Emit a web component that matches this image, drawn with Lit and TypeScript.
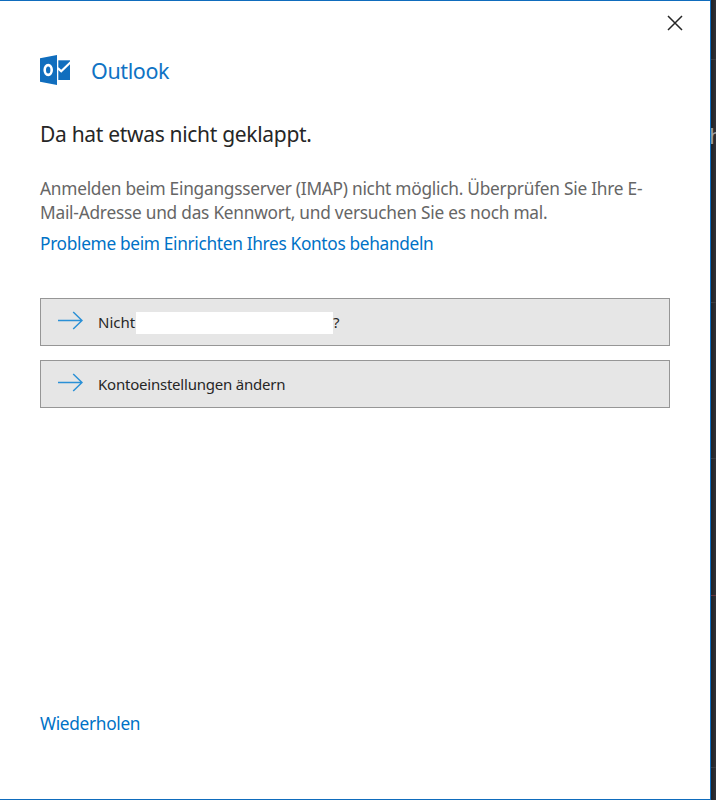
import { LitElement, html, css, svg } from "lit";
import { customElement } from "lit/decorators.js";

const arrow = svg`<path d="M0 9.5H24M15.2 1L24 9.5L15.2 18" fill="none" stroke="#2a90d6" stroke-width="1.5"/>`;

@customElement("app-root")
export class AppRoot extends LitElement {
  static styles = css`
    :host {
      display: flex;
      width: 716px;
      height: 800px;
      overflow: hidden;
      background: #2d2e33;
      font-family: "Noto Sans", "Open Sans", sans-serif;
      color: #262626;
    }
    .dialog {
      box-sizing: border-box;
      flex: none;
      width: 711px;
      height: 800px;
      display: flex;
      flex-direction: column;
      padding: 0 40px;
      background: #fff;
      border: 1px solid #0f6cbd;
      border-left: 0;
    }
    .backdrop {
      flex: none;
      width: 5px;
      height: 800px;
      overflow: hidden;
      background: linear-gradient(90deg, #202125, #303137);
    }
    .backdrop svg { display: block; }
    .top {
      display: flex;
      justify-content: flex-end;
      height: 52px;
      margin-right: -13px;
      padding-top: 14px;
      box-sizing: border-box;
    }
    .brand { display: flex; align-items: center; height: 34px; gap: 21px; }
    .brand svg, .top svg, .choice svg { display: block; flex: none; }
    .name { padding-top: 2px; font-size: 21.5px; line-height: 34px; color: #0f73c4; white-space: nowrap; letter-spacing: -0.4px; }
    h1 { margin: 31px 0 0; font-size: 21px; line-height: 32px; font-weight: 400; white-space: nowrap; letter-spacing: -0.31px; }
    .message { margin-top: 27px; font-size: 17.3px; line-height: 24px; color: #666; white-space: nowrap; }
    .message div, .link { width: max-content; }
    .l1 { letter-spacing: -0.25px; }
    .l2 { letter-spacing: -0.24px; }
    .link { font-size: 17.3px; line-height: 24px; color: #0072c6; white-space: nowrap; letter-spacing: -0.33px; }
    .help { margin-top: 7px; }
    .choices { display: flex; flex-direction: column; gap: 14px; margin-top: 42px; }
    .choice {
      box-sizing: border-box;
      height: 48px;
      display: flex;
      align-items: center;
      padding-left: 17px;
      background: #e6e6e6;
      border: 1px solid #969696;
      font-size: 15px;
      white-space: nowrap;
    }
    .choice svg { margin: -3px 15px 0 0; }
    .label { letter-spacing: -0.22px; }
    .who { width: 38px; letter-spacing: 0; }
    .address { width: 197px; height: 22px; margin-top: 2px; background: #fff; }
    .retry { margin-top: 304px; }
  `;

  render() {
    return html`
      <div class="dialog">
        <div class="top">
          <svg width="16" height="16" viewBox="0 0 16 16"><path d="M1 1L15 15M15 1L1 15" stroke="#262626" stroke-width="1.5"/></svg>
        </div>
        <div class="brand">
          <svg width="30" height="30" viewBox="0 0 30 30">
            <path d="M0 3.3L17 0V30L0 26.7Z" fill="#106ebe"/>
            <ellipse cx="8.2" cy="15" rx="3.5" ry="4.9" fill="none" stroke="#fff" stroke-width="2.6"/>
            <path d="M18.3 5.3H30V25H18.3Z" fill="#106ebe"/>
            <path d="M17.8 13.1L21.2 16.2L30.6 7.2" fill="none" stroke="#fff" stroke-width="2.2"/>
          </svg>
          <span class="name">Outlook</span>
        </div>
        <h1>Da hat etwas nicht geklappt.</h1>
        <div class="message">
          <div class="l1">Anmelden beim Eingangsserver (IMAP) nicht möglich. Überprüfen Sie Ihre E-</div>
          <div class="l2">Mail-Adresse und das Kennwort, und versuchen Sie es noch mal.</div>
        </div>
        <div class="link help">Probleme beim Einrichten Ihres Kontos behandeln</div>
        <div class="choices">
          <div class="choice">
            <svg width="25" height="19" viewBox="0 0 25 19">${arrow}</svg>
            <span class="label who">Nicht</span><span class="address"></span><span class="label">?</span>
          </div>
          <div class="choice">
            <svg width="25" height="19" viewBox="0 0 25 19">${arrow}</svg>
            <span class="label">Kontoeinstellungen ändern</span>
          </div>
        </div>
        <div class="link retry">Wiederholen</div>
      </div>
      <div class="backdrop">
        <svg width="5" height="800" viewBox="0 0 5 800">
          <path d="M0 59.5H5M0 302.5H5M0 458.5H5M0 767.5H5" stroke="#3b3c42"/>
          <path d="M0 595.5H5" stroke="#653740"/>
          <text x="-1.7" y="144" font-size="21" fill="#a0a1a4">h</text>
        </svg>
      </div>
    `;
  }
}
